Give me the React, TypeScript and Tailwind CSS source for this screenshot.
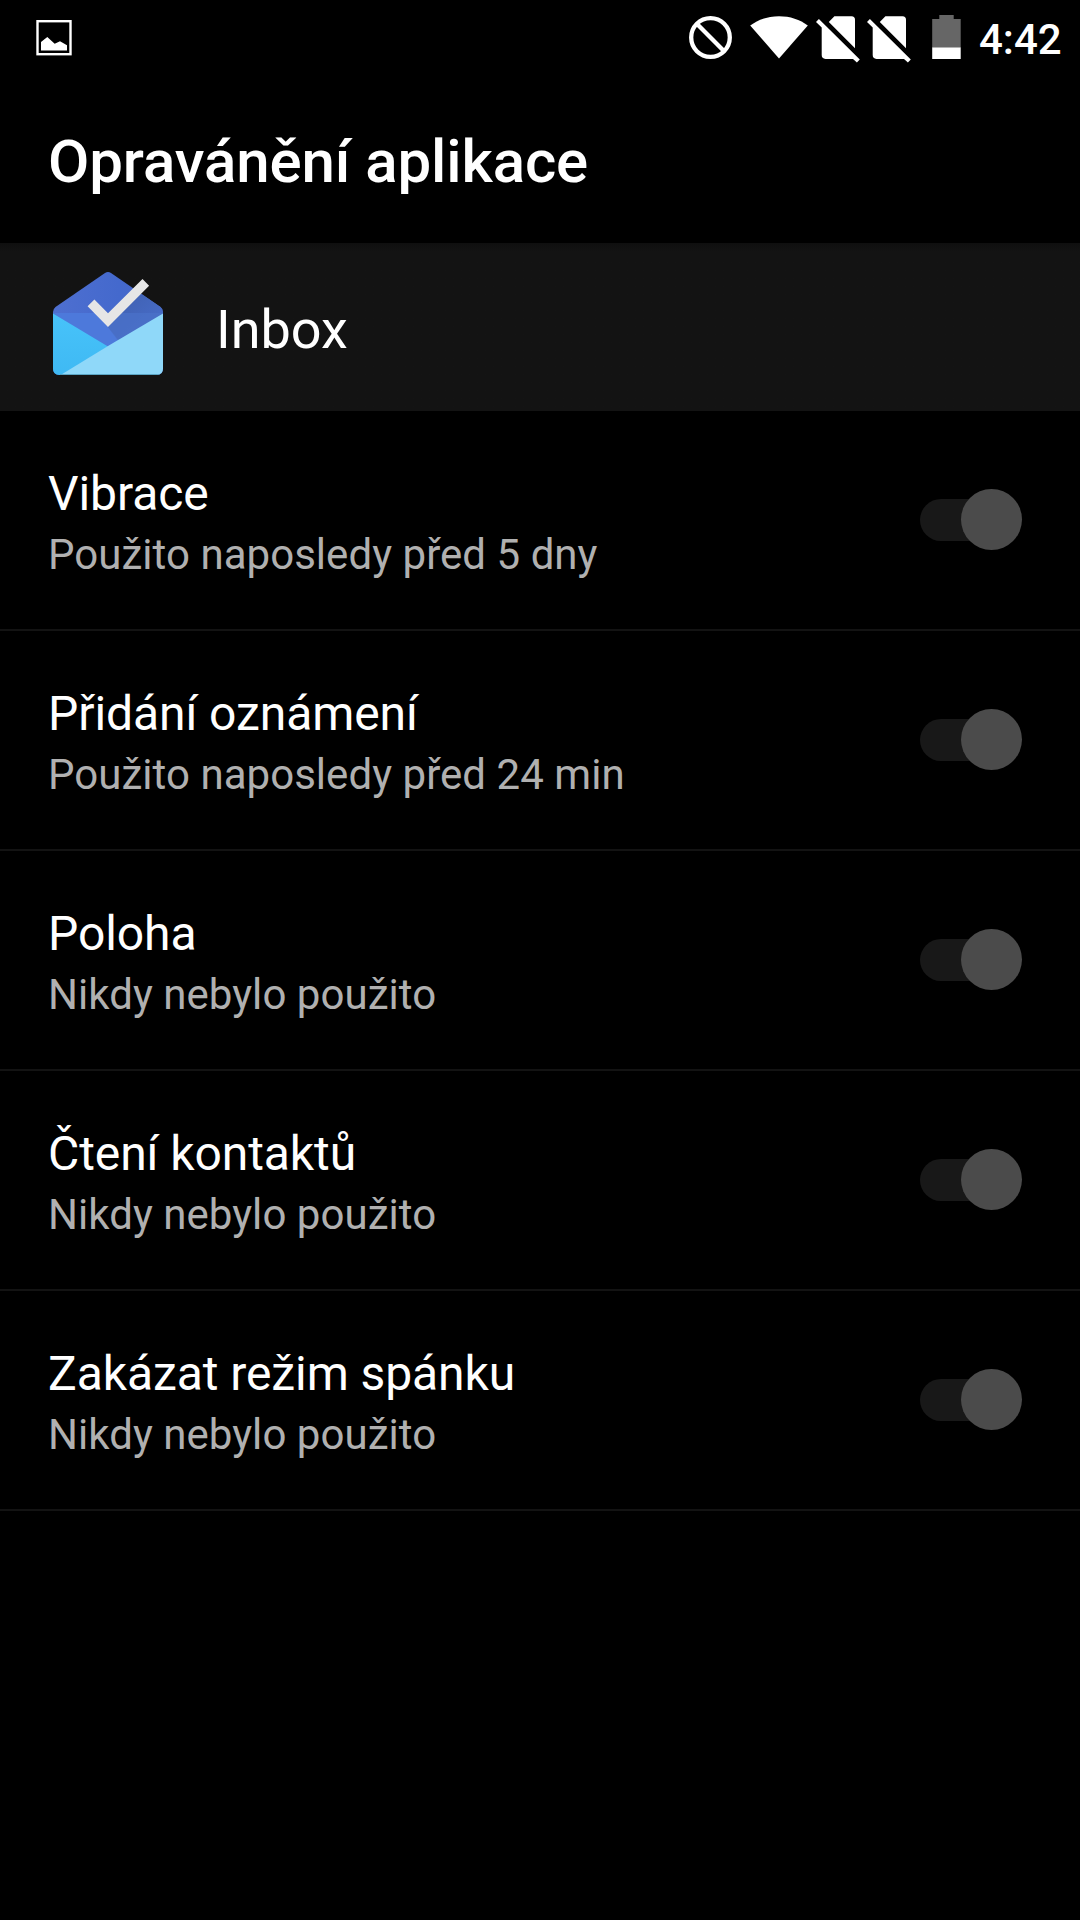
const permissions = [
  { name: 'Vibrace', usage: 'Použito naposledy před 5 dny' },
  { name: 'Přidání oznámení', usage: 'Použito naposledy před 24 min' },
  { name: 'Poloha', usage: 'Nikdy nebylo použito' },
  { name: 'Čtení kontaktů', usage: 'Nikdy nebylo použito' },
  { name: 'Zakázat režim spánku', usage: 'Nikdy nebylo použito' },
];

function PictureIcon() {
  return (
    <svg className="h-[72px] w-[40px]" viewBox="34 0 40 72" fill="none">
      <rect x="37.5" y="21.2" width="33" height="33" stroke="#fff" strokeWidth="2.4" />
      <path d="M41 50.5V42L47.3 37L54.7 43.7L60 41.2L67 45.3V50.5Z" fill="#fff" />
    </svg>
  );
}

function BlockedIcon() {
  return (
    <svg className="h-[72px] w-[44px]" viewBox="688 0 44 72" fill="none" stroke="#fff" strokeWidth="4.3">
      <circle cx="710.5" cy="37.5" r="19.3" />
      <path d="M697.3 24.3L723.4 50.4" />
    </svg>
  );
}

function WifiIcon() {
  return (
    <svg className="h-[72px] w-[58px]" viewBox="750 0 58 72" fill="#fff">
      <path d="M779 58.5L750.2 25.5C758 19.5 768 16.2 779 16.2S800 19.5 807.8 25.5Z" />
    </svg>
  );
}

function NoSimIcon() {
  return (
    <svg className="h-[72px] w-[44px]" viewBox="816 0 44 72" fill="#fff">
      <path d="M828.8 22L834.4 16.3H851.5A3.5 3.5 0 0 1 855 19.8V48.3Z" />
      <path d="M816 21.9L818.9 19L859.8 59.6L856.9 62.4L853 58.9H825.5A3.8 3.8 0 0 1 821.7 55.1V27.6Z" />
    </svg>
  );
}

function BatteryIcon() {
  return (
    <svg className="h-[72px] w-[29px]" viewBox="932 0 29 72">
      <path d="M932.2 19H939.3V15H953.7V19H960.7V48H932.2Z" fill="#666" />
      <path d="M932.2 47.5H960.7V59H932.2Z" fill="#fff" />
    </svg>
  );
}

function InboxIcon() {
  return (
    <svg className="h-[110px] w-[110px]" viewBox="53 270 110 110">
      <defs>
        <linearGradient id="flap" x1="0" y1="0" x2="1" y2="0">
          <stop offset="0" stopColor="#4e6fd0" />
          <stop offset="0.6" stopColor="#4469cd" />
          <stop offset="1" stopColor="#4766c4" />
        </linearGradient>
        <linearGradient id="shade" gradientUnits="userSpaceOnUse" x1="130" y1="300" x2="150" y2="322">
          <stop offset="0" stopColor="#4163b6" />
          <stop offset="1" stopColor="#466ac4" />
        </linearGradient>
        <linearGradient id="left" x1="0" y1="0" x2="0" y2="1">
          <stop offset="0" stopColor="#47c3fa" />
          <stop offset="1" stopColor="#3fb9f3" />
        </linearGradient>
        <clipPath id="body">
          <path d="M105 273Q108 271 111 273L160.500 307Q163 309 163 312V368.500Q163 375 156.500 375H59.500Q53 375 53 368.500V312Q53 309 55.500 307Z" />
        </clipPath>
      </defs>
      <g clipPath="url(#body)">
        <path d="M53 270H163V376H53Z" fill="url(#flap)" />
        <path d="M53 313H163L108 350Z" fill="#4d79db" />
        <path d="M108 327L141 284L163 300V316L119 340.500L108 327Z" fill="url(#shade)" />
        <path d="M120 313H163L119 342L108 327Z" fill="#4a70c8" opacity="0.8" />
        <path d="M53 313.500L108 346.500L64 376H53Z" fill="url(#left)" />
        <path d="M163 313.500V376H59L108 346Z" fill="#8fd8f9" />
        <path d="M60 374.600H160" stroke="#4f98b8" strokeWidth="0.900" />
      </g>
      <path d="M87.600 306.300L94.400 299.500L108 313.200L142.500 278.900L149.100 285.700L108 326.900Z" fill="#e6e6e6" />
    </svg>
  );
}

function Toggle() {
  return (
    <div className="flex h-[61px] w-[102px] items-start">
      <div className="mt-[10px] h-[42px] w-[70px] rounded-l-full bg-[#181818]" />
      <div className="-ml-[29px] size-[61px] shrink-0 rounded-full bg-[#4b4b4b]" />
    </div>
  );
}

export default function App() {
  return (
    <div className="flex h-[1920px] w-[1080px] flex-col overflow-hidden bg-black font-[Roboto,sans-serif] text-white">
      <div className="flex h-[72px] shrink-0 items-start pl-[34px]">
        <PictureIcon />
        <div className="ml-auto flex pr-[18px]">
          <BlockedIcon />
          <div className="ml-[18px] flex"><WifiIcon /></div>
          <div className="ml-2 flex"><NoSimIcon /></div>
          <div className="ml-[7px] flex"><NoSimIcon /></div>
          <div className="ml-[21px] flex"><BatteryIcon /></div>
          <div className="mt-[15px] ml-[18px] w-[83px] text-[42px] leading-[50px] font-medium whitespace-nowrap">4:42</div>
        </div>
      </div>

      <header className="h-[171px] shrink-0 pt-[55px] pl-12">
        <h1 className="text-[60px] leading-[70px] font-medium tracking-[-0.1px]">Opravánění aplikace</h1>
      </header>

      <div className="flex h-[168px] shrink-0 items-start bg-[#131313] bg-linear-to-b from-[#0f0f0f] to-[#131313] to-[9px] pl-[53px]">
        <div className="mt-[27px]"><InboxIcon /></div>
        <div className="mt-[55px] ml-[53px] text-[54px] leading-[64px]">Inbox</div>
      </div>

      <ul>
        {permissions.map((p) => (
          <li key={p.name} className="flex h-[220px] items-start justify-between border-b-2 border-[#131313] pr-[58px] pl-12">
            <div className="pt-[55px]">
              <div className="text-[48px] leading-[56px] tracking-[-0.08px]">{p.name}</div>
              <div className="mt-2 text-[42px] leading-[50px] tracking-[0.04px] text-[#b0b0b0]">{p.usage}</div>
            </div>
            <div className="mt-[78px]"><Toggle /></div>
          </li>
        ))}
      </ul>
    </div>
  );
}
